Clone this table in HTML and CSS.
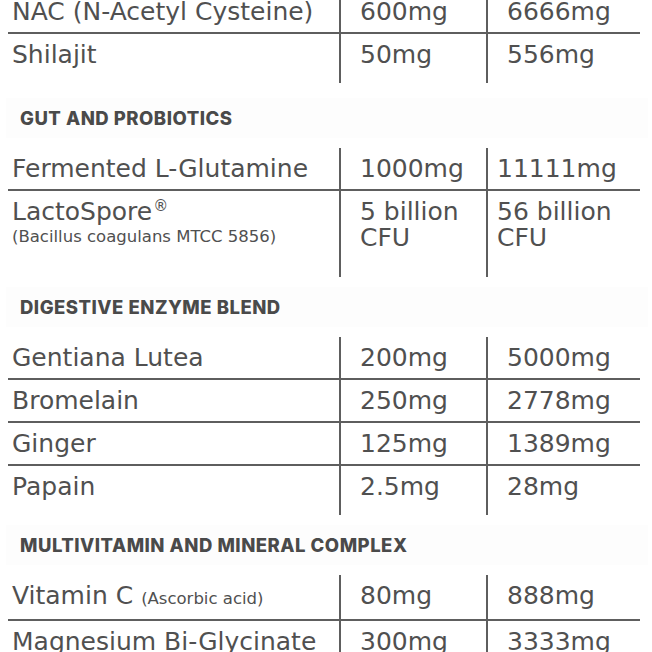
FILE: index.html
```html
<!DOCTYPE html>
<html lang="en">
<head>
<meta charset="utf-8">
<title>Supplement facts</title>
<link rel="stylesheet" href="styles.css">
</head>
<body>
<main class="sheet">
  <section class="table table--top">
    <div class="row">
      <div class="cell name">NAC (N-Acetyl Cysteine)</div>
      <div class="cell amt">600mg</div>
      <div class="cell amt">6666mg</div>
    </div>
    <div class="row row--last">
      <div class="cell name">Shilajit</div>
      <div class="cell amt">50mg</div>
      <div class="cell amt">556mg</div>
    </div>
  </section>

  <h2 class="section section--first">GUT AND PROBIOTICS</h2>
  <section class="table">
    <div class="row">
      <div class="cell name">Fermented L-Glutamine</div>
      <div class="cell amt">1000mg</div>
      <div class="cell amt amt--tight">11111mg</div>
    </div>
    <div class="row row--last row--tall">
      <div class="cell name">LactoSpore<sup class="reg">®</sup><span class="sub">(Bacillus coagulans MTCC 5856)</span></div>
      <div class="cell amt amt--multi"><span class="line">5 billion</span><span class="line">CFU</span></div>
      <div class="cell amt amt--multi amt--tight"><span class="line">56 billion</span><span class="line">CFU</span></div>
    </div>
  </section>

  <h2 class="section">DIGESTIVE ENZYME BLEND</h2>
  <section class="table">
    <div class="row">
      <div class="cell name">Gentiana Lutea</div>
      <div class="cell amt">200mg</div>
      <div class="cell amt">5000mg</div>
    </div>
    <div class="row">
      <div class="cell name">Bromelain</div>
      <div class="cell amt">250mg</div>
      <div class="cell amt">2778mg</div>
    </div>
    <div class="row">
      <div class="cell name">Ginger</div>
      <div class="cell amt">125mg</div>
      <div class="cell amt">1389mg</div>
    </div>
    <div class="row row--last">
      <div class="cell name">Papain</div>
      <div class="cell amt">2.5mg</div>
      <div class="cell amt">28mg</div>
    </div>
  </section>

  <h2 class="section">MULTIVITAMIN AND MINERAL COMPLEX</h2>
  <section class="table">
    <div class="row">
      <div class="cell name">Vitamin C <span class="note">(Ascorbic acid)</span></div>
      <div class="cell amt">80mg</div>
      <div class="cell amt">888mg</div>
    </div>
    <div class="row row--last">
      <div class="cell name">Magnesium Bi-Glycinate</div>
      <div class="cell amt">300mg</div>
      <div class="cell amt">3333mg</div>
    </div>
  </section>
</main>
</body>
</html>
```
FILE: styles.css
```css
html, body {
  margin: 0;
  background: #ffffff;
}

body {
  overflow: hidden;
}

.sheet {
  padding: 0 12px 0 8px;
  color: #505050;
  font-family: "DejaVu Sans", "Inter", sans-serif;
}

.table--top {
  margin-top: -9px;
}

.row {
  display: grid;
  grid-template-columns: 331px 147px 154px;
  border-bottom: 2px solid #5e5e5e;
}

.row--last {
  border-bottom: none;
}

.cell {
  font-size: 25px;
  line-height: 29px;
  padding: 6px 0 6px 4px;
  white-space: nowrap;
}

.row--last .cell {
  padding-bottom: 14px;
}

.amt {
  border-left: 2px solid #5e5e5e;
  padding-left: 19px;
}

.amt--tight {
  padding-left: 9px;
}

.row--tall .name {
  padding-bottom: 30px;
}

.row--tall .amt--multi {
  padding-top: 8px;
}

.line {
  display: block;
  height: 26px;
  line-height: 26px;
}

.reg {
  font-size: 15px;
  line-height: 0;
  vertical-align: 9px;
  margin-left: 1px;
}

.sub {
  display: block;
  font-size: 16.5px;
  line-height: 21px;
}

.note {
  font-size: 16.5px;
}

.section {
  margin: 10px -8px 10px -2px;
  padding: 8px 14px;
  background: #fdfdfd;
  font-family: "Inter", "Liberation Sans", sans-serif;
  font-weight: 800;
  font-size: 18.5px;
  line-height: 24px;
  letter-spacing: 0.5px;
  color: #4a4a4a;
}

.section--first {
  margin-top: 15px;
}
```
